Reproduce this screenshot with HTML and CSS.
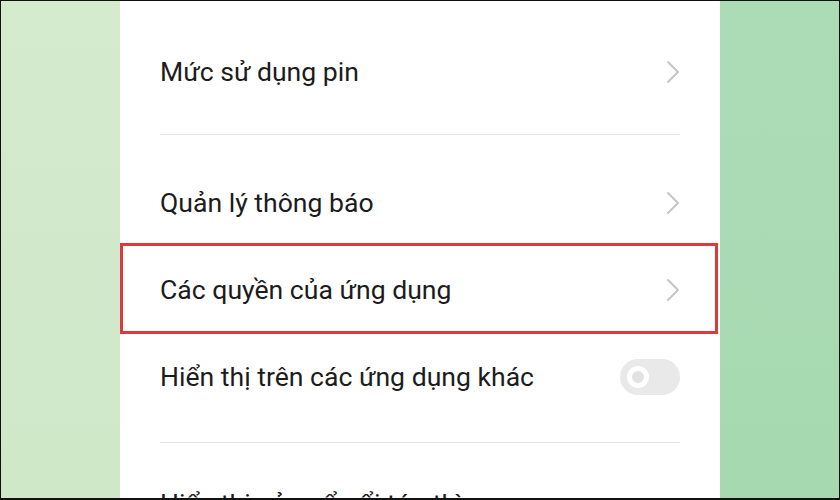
FILE: index.html
```html
<!DOCTYPE html>
<html lang="vi">
<head>
<meta charset="utf-8">
<title>Cài đặt ứng dụng</title>
<link rel="stylesheet" href="styles.css">
</head>
<body>
<div class="frame">
  <div class="side side-left"></div>
  <div class="panel">
    <div class="list">
      <div class="row"><span class="label">Chi tiết sử dụng dữ liệu</span></div>
      <div class="row">
        <span class="label">Mức sử dụng pin</span>
        <svg class="chev" viewBox="0 0 14 24" width="14" height="24"><polyline points="2,2 12,12 2,22"/></svg>
      </div>
      <div class="divider divider-a"></div>
      <div class="row">
        <span class="label">Quản lý thông báo</span>
        <svg class="chev" viewBox="0 0 14 24" width="14" height="24"><polyline points="2,2 12,12 2,22"/></svg>
      </div>
      <div class="row row-hl">
        <span class="label">Các quyền của ứng dụng</span>
        <svg class="chev" viewBox="0 0 14 24" width="14" height="24"><polyline points="2,2 12,12 2,22"/></svg>
      </div>
      <div class="row">
        <span class="label">Hiển thị trên các ứng dụng khác</span>
        <span class="toggle"><span class="knob"></span></span>
      </div>
      <div class="divider divider-b"></div>
      <div class="row"><span class="label">Hiển thị cửa sổ nổi tức thì</span></div>
    </div>
  </div>
  <div class="side side-right"></div>
</div>
</body>
</html>
```
FILE: styles.css
```css
html, body {
  margin: 0;
  padding: 0;
}
body {
  width: 840px;
  height: 500px;
  overflow: hidden;
  font-family: Roboto, "Noto Sans", "Liberation Sans", sans-serif;
}
.frame {
  box-sizing: border-box;
  width: 840px;
  height: 500px;
  border: 1px solid #111;
  border-bottom-width: 2px;
  display: flex;
  overflow: hidden;
  background: linear-gradient(90deg, #d6edcf 0%, #cfe9c8 14%, #b2dfb9 86%, #a6d9b0 100%);
}
.side {
  width: 119px;
  flex: none;
}
.side-left {
  background: linear-gradient(180deg, #d4ebcd 0%, #cfe8c8 100%);
}
.side-right {
  background: linear-gradient(180deg, #acdcb5 0%, #a7d9b1 100%);
}
.panel {
  width: 600px;
  flex: none;
  background: #fff;
  overflow: hidden;
}
.list {
  margin-top: -60px;
  display: flex;
  flex-direction: column;
}
.row {
  position: relative;
  height: 87px;
  flex: none;
  padding: 0 40px;
  display: flex;
  align-items: center;
  justify-content: space-between;
}
.label {
  font-size: 26.6px;
  color: #1c1c1c;
}
.chev {
  fill: none;
  stroke: #c6c6c6;
  stroke-width: 2;
  stroke-linecap: round;
  stroke-linejoin: round;
}
.row-hl::after {
  content: "";
  position: absolute;
  left: 0;
  right: 2px;
  top: -3px;
  bottom: -1px;
  border: 3px solid #e0393d;
  pointer-events: none;
}
.divider {
  flex: none;
  height: 1px;
  margin-left: 40px;
  margin-right: 40px;
  background: #e6e6e6;
}
.divider-a {
  margin-top: 19px;
  margin-bottom: 24px;
}
.divider-b {
  margin-top: 22px;
  margin-bottom: 17px;
}
.toggle {
  width: 60px;
  height: 36px;
  border-radius: 18px;
  background: #e9e9e9;
  display: flex;
  align-items: center;
  padding-left: 7px;
  box-sizing: border-box;
}
.knob {
  box-sizing: border-box;
  width: 22px;
  height: 22px;
  border-radius: 50%;
  border: 5px solid #fff;
  background: #e2e2e2;
}
```
